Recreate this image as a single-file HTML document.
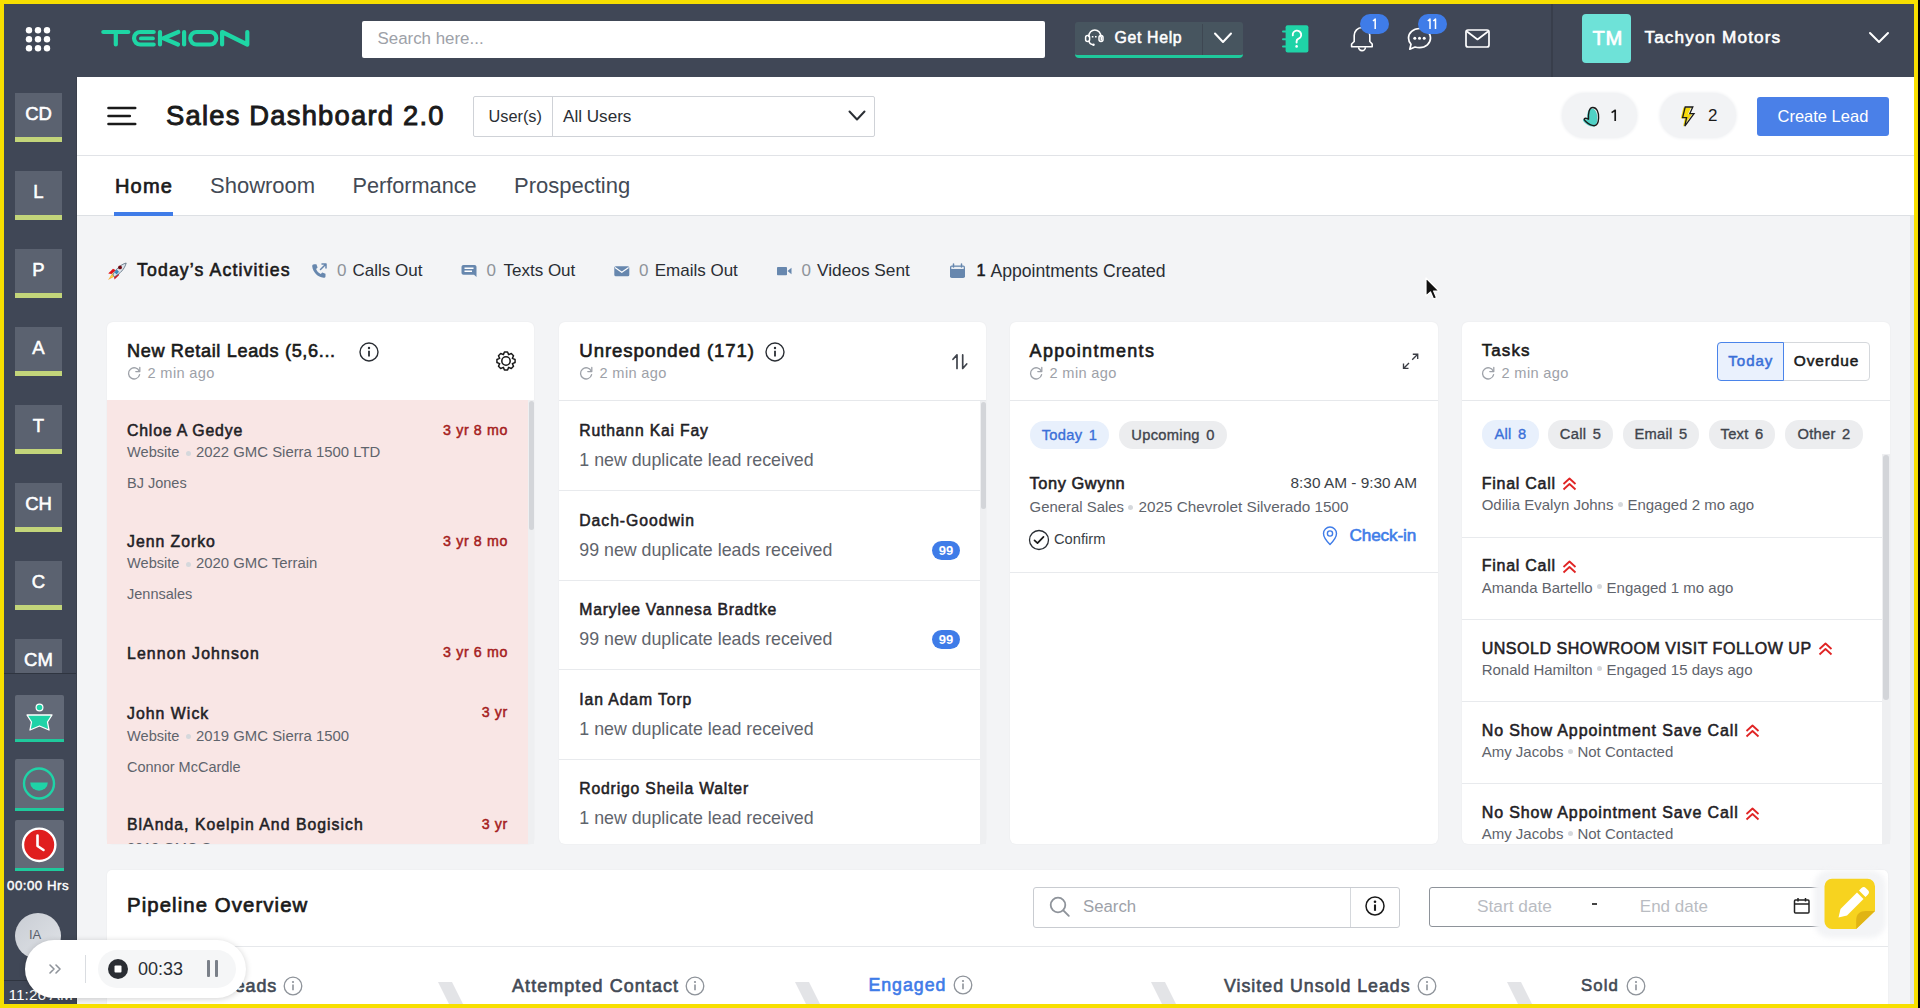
<!DOCTYPE html>
<html><head><meta charset="utf-8">
<style>
*{box-sizing:border-box;margin:0;padding:0}
html,body{width:1920px;height:1008px;overflow:hidden;background:#000;font-family:"Liberation Sans",sans-serif}
.a{position:absolute}
.t{position:absolute;left:var(--x);top:calc(var(--y) - 0.158*var(--s) - var(--o,0px));font-size:var(--s);line-height:1;white-space:nowrap}
.b{font-weight:bold}
.m{-webkit-text-stroke:calc(var(--s)*0.034) currentColor}
.r{transform:translateX(-100%)}
svg{position:absolute;overflow:visible}
#page{position:absolute;left:0;top:0;width:1918px;height:1008px;background:#F3F4F6;overflow:hidden}
.card{position:absolute;top:322px;height:522px;background:#fff;border-radius:6px;box-shadow:0 0 2px rgba(0,0,0,.06);overflow:hidden}
.sb{left:15px;width:47px;height:49px;background:#5B6270;border-bottom:5px solid #C3D57A;color:#fff;font-size:18.5px;-webkit-text-stroke:0.55px #fff;line-height:41.5px;text-align:center}
.sbi{position:absolute;left:15px;width:49px;height:47px;background:#626977;border-bottom:3px solid #1FC99C;border-radius:2px 2px 0 0}
.dot{width:5px;height:5px;border-radius:50%;background:#D5D8DC}
.badge{width:28px;height:19px;border-radius:10px;background:#3F7CE8;color:#fff;font-weight:bold;font-size:13px;line-height:19px;text-align:center}
.chip{height:28px;border-radius:14px;font-size:14.7px;-webkit-text-stroke:0.35px currentColor;letter-spacing:0.3px;word-spacing:2px;line-height:28px;text-align:center;white-space:nowrap}
.dbl{position:relative;display:inline-block;vertical-align:top;margin-left:6px;margin-top:2.5px}
.sdot{display:inline-block;width:5px;height:5px;border-radius:50%;background:#D5D8DC;margin:0 4.5px;vertical-align:middle;position:relative;top:-2px}
.hdiv{position:absolute;left:0;right:0;top:77px;height:1px;background:#E6E8EB}
</style></head><body>
<div id="page">

<!-- TOP HEADER -->
<div class="a" style="left:0;top:0;width:1918px;height:77px;background:#404756"></div>
<!-- grid dots -->
<svg style="left:0;top:0" width="80" height="77">
<g fill="#fff">
<circle cx="29" cy="30.3" r="3.2"/><circle cx="38" cy="30.3" r="3.2"/><circle cx="47" cy="30.3" r="3.2"/>
<circle cx="29" cy="39.3" r="3.2"/><circle cx="38" cy="39.3" r="3.2"/><circle cx="47" cy="39.3" r="3.2"/>
<circle cx="29" cy="48.3" r="3.2"/><circle cx="38" cy="48.3" r="3.2"/><circle cx="47" cy="48.3" r="3.2"/>
</g></svg>
<!-- TEKION logo -->
<svg style="left:95px;top:22px" width="160" height="32">
<g fill="none" stroke="#1ED6A5" stroke-width="4.2" stroke-linecap="round" stroke-linejoin="round">
<path d="M8.3,10H33.3M20.8,10V22.5"/>
<path d="M58.7,10H45.3A6.25,6.25 0 0 0 45.3,22.5H58.7"/>
<path d="M45.8,16.45H58" stroke-width="3.7"/>
<path d="M65,10V22.5M83.3,10L68.5,16.3L83,22.5"/>
<path d="M89.1,10V22.5"/>
<rect x="95.3" y="10" width="26" height="12.5" rx="6.25"/>
<path d="M127.1,22.5V10L152.3,22.5V10"/>
</g></svg>
<!-- search -->
<div class="a" style="left:362px;top:21px;width:683px;height:37px;background:#fff;border-radius:2px"></div>
<div class="t" style="--x:377.5px;--y:32.5px;--s:16.9px;--o:-1.60px;color:#9DA1A8">Search here...</div>
<!-- Get Help -->
<div class="a" style="left:1075px;top:22px;width:168px;height:36px;background:#47555F;border-radius:3px 3px 4px 4px;border-bottom:3px solid #1FC99C"></div>
<div class="a" style="left:1202px;top:24px;width:1px;height:31px;background:#3E4752"></div>
<svg style="left:1084px;top:28px" width="21" height="19" viewBox="0 0 21 19">
<g fill="none" stroke="#fff" stroke-width="1.5" stroke-linecap="round">
<path d="M4.8,8.5A6,6.6 0 0 1 16.8,8.5"/>
<rect x="1.6" y="7.4" width="4" height="6" rx="2"/>
<rect x="15" y="7.4" width="4" height="6" rx="2"/>
<path d="M5,13.2Q5.5,16.5 9.5,16.8"/>
</g>
<g fill="#fff"><rect x="7.8" y="8" width="1.6" height="1.5"/><rect x="11" y="8" width="1.6" height="1.5"/><circle cx="9.5" cy="16.8" r="1.2"/><rect x="16.5" y="8.5" width="1.5" height="4"/></g>
</svg>
<div class="t m" style="--x:1114.5px;--y:31.3px;--s:15.84px;--o:-1.50px;color:#fff;letter-spacing:0.67px">Get Help</div>
<svg style="left:1213px;top:32px" width="20" height="12" viewBox="0 0 20 12"><path d="M2,1.5L10,10L18,1.5" fill="none" stroke="#fff" stroke-width="2" stroke-linecap="round" stroke-linejoin="round"/></svg>
<!-- help book -->
<svg style="left:1282px;top:24.5px" width="28" height="28" viewBox="0 0 28 28">
<rect x="3.6" y="0.2" width="22.8" height="27.2" rx="2" fill="#1FD3A7"/>
<g fill="#1FD3A7"><rect x="0" y="5.5" width="5" height="2" rx="1"/><rect x="0" y="13.2" width="5" height="2" rx="1"/><rect x="0" y="20.5" width="5" height="2" rx="1"/></g>
<path d="M10.8,10.3A4.2,4.2 0 1 1 16.2,13.8C15.2,14.3 14.6,15 14.6,16.2V17.5" fill="none" stroke="#fff" stroke-width="1.9" stroke-linecap="round"/>
<circle cx="14.6" cy="21.4" r="1.3" fill="#fff"/>
</svg>
<!-- bell -->
<svg style="left:1349px;top:25px" width="26" height="28" viewBox="0 0 26 28">
<path d="M5.2,16.5V10.5A7.8,8 0 0 1 20.8,10.5V16.5L23.2,19V21.8H2.6V19Z" fill="none" stroke="#fff" stroke-width="1.6" stroke-linejoin="round"/>
<path d="M9.6,22.2A3.4,3.4 0 0 0 16.4,22.2" fill="none" stroke="#fff" stroke-width="1.6"/>
</svg>
<div class="a" style="left:1360px;top:14px;width:29px;height:20px;border-radius:10px;background:#3F7CE8"></div>
<svg style="left:1360px;top:14px" width="29" height="20" viewBox="0 0 29 20"><path d="M13,7L15.2,5V15" fill="none" stroke="#fff" stroke-width="1.5" stroke-linejoin="round"/></svg>
<!-- chat -->
<svg style="left:1406px;top:26px" width="28" height="26" viewBox="0 0 28 26">
<path d="M13.5,2.5C7.2,2.5 2.5,6.8 2.5,12C2.5,14.5 3.5,16.6 5,18.3L3.8,23.2L9,21C10.4,21.4 11.9,21.6 13.5,21.6C19.8,21.6 24.5,17.3 24.5,12C24.5,6.8 19.8,2.5 13.5,2.5Z" fill="none" stroke="#fff" stroke-width="1.7" stroke-linejoin="round"/>
<g fill="#fff"><circle cx="8.8" cy="12.2" r="1.5"/><circle cx="13.5" cy="12.2" r="1.5"/><circle cx="18.2" cy="12.2" r="1.5"/></g>
</svg>
<div class="a" style="left:1418px;top:14px;width:29px;height:20px;border-radius:10px;background:#3F7CE8"></div>
<svg style="left:1418px;top:14px" width="29" height="20" viewBox="0 0 29 20"><path d="M9.8,7L12,5V15M15.3,7L17.5,5V15" fill="none" stroke="#fff" stroke-width="1.5" stroke-linejoin="round"/></svg>
<!-- mail -->
<svg style="left:1465px;top:29px" width="26" height="20" viewBox="0 0 26 20">
<rect x="1" y="1" width="23" height="17" rx="2" fill="none" stroke="#fff" stroke-width="1.7"/>
<path d="M2,2.5L12.5,10.5L23,2.5" fill="none" stroke="#fff" stroke-width="1.7" stroke-linejoin="round"/>
</svg>
<!-- divider -->
<div class="a" style="left:1551px;top:4px;width:2px;height:73px;background:#383E4B"></div>
<!-- TM -->
<div class="a" style="left:1582px;top:14px;width:49px;height:49px;background:#6EE2D8;border-radius:4px"></div>
<div class="t m" style="--x:1592.5px;--y:31px;--s:20.16px;--o:-0.17px;color:#fff;letter-spacing:0.61px">TM</div>
<div class="t m" style="--x:1644.5px;--y:30.9px;--s:17.18px;--o:-0.62px;color:#fff;letter-spacing:1.11px">Tachyon Motors</div>
<svg style="left:1868px;top:31px" width="22" height="13" viewBox="0 0 22 13"><path d="M2,2L11,11L20,2" fill="none" stroke="#fff" stroke-width="2" stroke-linecap="round" stroke-linejoin="round"/></svg>

<!-- SIDEBAR -->
<div class="a" style="left:0;top:77px;width:76px;height:931px;background:#404756"></div>
<div class="a" style="left:76px;top:77px;width:1px;height:931px;background:#3A404C"></div>
<div class="a" style="left:0;top:77px;width:76px;height:597px;overflow:hidden">
 <div class="a sb" style="top:16px"><span>CD</span></div>
 <div class="a sb" style="top:94px"><span>L</span></div>
 <div class="a sb" style="top:172px"><span>P</span></div>
 <div class="a sb" style="top:250px"><span>A</span></div>
 <div class="a sb" style="top:328px"><span>T</span></div>
 <div class="a sb" style="top:406px"><span>CH</span></div>
 <div class="a sb" style="top:484px"><span>C</span></div>
 <div class="a sb" style="top:562px"><span>CM</span></div>
</div>
<div class="a" style="left:4px;top:673px;width:72px;height:1px;background:#2F3540"></div>
<!-- bottom sidebar icons -->
<div class="a sbi" style="top:695px"></div>
<svg style="left:15px;top:695px" width="49" height="44" viewBox="0 0 49 44">
<circle cx="24.5" cy="12.5" r="3.4" fill="#1FD3A7" stroke="#fff" stroke-width="1.2"/>
<path d="M12,20H37L32.5,27L34,35L24.5,31L15,35L16.5,27Z" fill="#1FD3A7" stroke="#fff" stroke-width="1.3" stroke-linejoin="round"/>
</svg>
<div class="a sbi" style="top:759px;height:51.5px"></div>
<svg style="left:15px;top:759px" width="49" height="48" viewBox="0 0 49 48">
<circle cx="24" cy="24.5" r="15" fill="none" stroke="#1FD3A7" stroke-width="2.4"/>
<path d="M15.2,23.5H32.8A8.8,8.3 0 0 1 15.2,23.5Z" fill="#1FD3A7"/>
</svg>
<div class="a sbi" style="top:820px;height:51px"></div>
<svg style="left:15px;top:820px" width="49" height="48" viewBox="0 0 49 48">
<circle cx="24.2" cy="24.8" r="16.2" fill="#E01E1E" stroke="#fff" stroke-width="2.4"/>
<path d="M22.5,15.5V26L28.5,30" fill="none" stroke="#fff" stroke-width="2.6" stroke-linecap="round" stroke-linejoin="round"/>
</svg>
<div class="t m" style="--x:7px;--y:881px;--s:13.25px;--o:0.16px;color:#fff;letter-spacing:0.52px">00:00 Hrs</div>
<div class="a" style="left:4px;top:980px;width:72px;height:1px;background:#2F3540"></div>
<div class="a" style="left:15px;top:913px;width:46px;height:46px;border-radius:50%;background:linear-gradient(135deg,#C9CDD4,#E0E3E7)"></div>
<div class="t" style="--x:29px;--y:930px;--s:13px;--o:0.15px;color:#5A606B">IA</div>
<div class="t" style="--x:8.5px;--y:990px;--s:15.5px;--o:0.68px;color:#fff">11:26 AM</div>

<!-- PAGE HEADER (white) -->
<div class="a" style="left:77px;top:77px;width:1841px;height:78px;background:#fff"></div>
<div class="a" style="left:77px;top:155px;width:1841px;height:1px;background:#E1E3E7"></div>
<svg style="left:106px;top:106px" width="32" height="20" viewBox="0 0 32 20">
<g stroke="#1A1A1A" stroke-width="2.6" stroke-linecap="round"><path d="M2.5,2H29.2M2.5,10H23.8M2.5,18H29.2"/></g>
</svg>
<div class="t m" style="--x:166px;--y:106px;--s:27.36px;--o:-0.31px;color:#1A1A1A;letter-spacing:1.22px">Sales Dashboard 2.0</div>
<div class="a" style="left:473px;top:96px;width:402px;height:41px;border:1px solid #CFD2D7;border-radius:2px;background:#fff"></div>
<div class="a" style="left:552px;top:97px;width:1px;height:39px;background:#CFD2D7"></div>
<div class="t" style="--x:488.5px;--y:110px;--s:16.3px;--o:-0.45px;color:#2A2E34">User(s)</div>
<div class="t" style="--x:563px;--y:110px;--s:17.1px;--o:-0.62px;color:#2A2E34">All Users</div>
<svg style="left:848px;top:110px" width="18" height="12" viewBox="0 0 18 12"><path d="M1.5,1.5L9,9.5L16.5,1.5" fill="none" stroke="#2A2E34" stroke-width="2" stroke-linecap="round" stroke-linejoin="round"/></svg>
<!-- pills -->
<div class="a" style="left:1562px;top:93px;width:75px;height:45px;border-radius:23px;background:#F2F3F5;box-shadow:0 0 3px 1px #F2F3F5"></div>
<svg style="left:1581px;top:106px" width="20" height="22" viewBox="0 0 20 22">
<path d="M7.5,13.2C7.2,8 7.8,1.5 11.8,1.5C15.8,1.5 17.8,6 17.6,12C17.4,17 16,19.7 13.2,19.7C9.5,19.7 7,17.5 4.8,15.5C3.5,14.3 2.8,13 3.5,12.5C4.5,11.8 6,12.5 7.5,13.2Z" transform="translate(-1.3,0.9)" fill="#4FD1C5"/>
<path d="M7.5,13.2C7.2,8 7.8,1.5 11.8,1.5C15.8,1.5 17.8,6 17.6,12C17.4,17 16,19.7 13.2,19.7C9.5,19.7 7,17.5 4.8,15.5C3.5,14.3 2.8,13 3.5,12.5C4.5,11.8 6,12.5 7.5,13.2Z" fill="none" stroke="#1A1A1A" stroke-width="1.4" stroke-linejoin="round"/>
</svg>
<svg style="left:1609px;top:109px" width="10" height="13" viewBox="0 0 10 13"><path d="M2.6,3.6L6.2,1.3V12" fill="none" stroke="#1A1A1A" stroke-width="1.7" stroke-linejoin="round"/></svg>
<div class="a" style="left:1660px;top:93px;width:76px;height:45px;border-radius:23px;background:#F2F3F5;box-shadow:0 0 3px 1px #F2F3F5"></div>
<svg style="left:1679px;top:106px" width="18" height="22" viewBox="0 0 18 22">
<path d="M6.2,1H13.8L10.8,7.6H15L5.8,20.2L7.6,11.6H3.6Z" transform="translate(-1.8,0.6)" fill="#F5D90A"/>
<path d="M6.2,1H13.8L10.8,7.6H15L5.8,20.2L7.6,11.6H3.6Z" fill="none" stroke="#1A1A1A" stroke-width="1.3" stroke-linejoin="miter"/>
</svg>
<div class="t" style="--x:1708px;--y:109.5px;--s:17px;--o:-0.60px;color:#1A1A1A">2</div>
<div class="a" style="left:1757px;top:97px;width:132px;height:39px;border-radius:3px;background:#4A80E8"></div>
<div class="t" style="--x:1777.5px;--y:109.7px;--s:16.5px;--o:-0.42px;color:#fff">Create Lead</div>

<!-- TABS -->
<div class="a" style="left:77px;top:156px;width:1841px;height:59px;background:#fff"></div>
<div class="a" style="left:77px;top:215px;width:1841px;height:1px;background:#DDE0E4"></div>
<div class="t m" style="--x:115px;--y:179px;--s:20.06px;--o:-0.17px;color:#1A1A1A;letter-spacing:1.14px">Home</div>
<div class="a" style="left:114px;top:212px;width:59px;height:4px;background:#3F7CE8"></div>
<div class="t" style="--x:210px;--y:178.5px;--s:22px;--o:-0.39px;color:#434A55">Showroom</div>
<div class="t" style="--x:352.5px;--y:178.5px;--s:21.7px;--o:-0.40px;color:#434A55">Performance</div>
<div class="t" style="--x:514px;--y:178.5px;--s:22px;--o:-0.39px;color:#434A55">Prospecting</div>

<!-- ACTIVITIES -->
<svg style="left:104px;top:258px" width="26" height="26" viewBox="0 0 26 26">
<path d="M4.2,15.5L9,10.8L12,12.2L7.5,16Z" fill="#E0161B"/>
<path d="M10.5,21.5L15.2,17L14,14L10,18.5Z" fill="#D5121A"/>
<path d="M4,22L8.5,15L11.5,18Z" fill="#F7B23B"/>
<path d="M6.2,20L8.8,16.3L9.8,17.4Z" fill="#FFE94A"/>
<path d="M8.8,17C11.5,11.5 16.5,6.5 22.2,5C20.7,11 15.8,15.8 10.5,18.8Z" fill="#DCE3EA" stroke="#56687A" stroke-width="0.8" stroke-linejoin="round"/>
<path d="M10.5,14.2L12.8,11.6L15,13.8L12.5,16.4Z" fill="#3A87B8"/>
<circle cx="16" cy="9.4" r="1.9" fill="#6E0B12"/>
</svg>
<div class="t m" style="--x:137px;--y:263.5px;--s:17.66px;--o:-1.79px;color:#1A1A1A;letter-spacing:1.14px">Today’s Activities</div>
<svg style="left:311px;top:263px" width="17" height="16" viewBox="0 0 17 16">
<path d="M3.2,1.2L5.4,1.2L6.6,4.6L5.1,5.9C5.9,8 7.5,9.8 9.8,10.9L11.2,9.4L14.5,10.7V13.2C14.5,14.2 13.6,14.9 12.6,14.8C6.6,14.1 1.9,9.3 1.2,3.3C1.1,2.1 2,1.2 3.2,1.2Z" fill="#6787AE"/>
<path d="M9.5,6.5L15,1M11,1H15V5" fill="none" stroke="#6787AE" stroke-width="1.5" stroke-linecap="round" stroke-linejoin="round"/>
</svg>
<div class="t" style="--x:337px;--y:264.5px;--s:17px;--o:-0.60px;color:#8E939A">0</div>
<div class="t" style="--x:352.5px;--y:264.5px;--s:17px;--o:-0.60px;color:#2A2E34">Calls Out</div>
<svg style="left:461px;top:264px" width="17" height="14" viewBox="0 0 17 14">
<path d="M2.5,1H13.5C14.6,1 15.5,1.9 15.5,3V13L13,10.8H2.5C1.4,10.8 0.5,9.9 0.5,8.8V3C0.5,1.9 1.4,1 2.5,1Z" fill="#6787AE"/>
<path d="M3.5,4.3H12.5M3.5,7.3H11" stroke="#fff" stroke-width="1.4"/>
</svg>
<div class="t" style="--x:486.5px;--y:264.5px;--s:17px;--o:-0.60px;color:#8E939A">0</div>
<div class="t" style="--x:503.5px;--y:264.5px;--s:17px;--o:-0.60px;color:#2A2E34">Texts Out</div>
<svg style="left:614px;top:266px" width="16" height="11" viewBox="0 0 16 11">
<rect x="0.3" y="0.3" width="15" height="10" rx="1.5" fill="#6787AE"/>
<path d="M1,1.5L7.8,6.3L14.6,1.5" fill="none" stroke="#fff" stroke-width="1.1"/>
</svg>
<div class="t" style="--x:639px;--y:264.5px;--s:17px;--o:-0.60px;color:#8E939A">0</div>
<div class="t" style="--x:654.7px;--y:264.5px;--s:17px;--o:-0.60px;color:#2A2E34">Emails Out</div>
<svg style="left:776px;top:266px" width="17" height="10" viewBox="0 0 17 10">
<rect x="1" y="1" width="10" height="8.2" rx="0.8" fill="#6787AE"/>
<path d="M11.5,5L15.5,1.8V8.2Z" fill="#6787AE"/>
</svg>
<div class="t" style="--x:801.5px;--y:264.5px;--s:17px;--o:-0.60px;color:#8E939A">0</div>
<div class="t" style="--x:817px;--y:264.5px;--s:17.3px;--o:-0.64px;color:#2A2E34">Videos Sent</div>
<svg style="left:949px;top:263px" width="17" height="16" viewBox="0 0 17 16">
<rect x="1" y="2.5" width="15" height="12.5" rx="1.8" fill="#6787AE"/>
<rect x="2.3" y="3.8" width="12.4" height="2.2" fill="#E9EDF2"/>
<path d="M4.5,1V4M12.5,1V4" stroke="#6787AE" stroke-width="1.5" stroke-linecap="round"/>
</svg>
<div class="t m" style="--x:976.5px;--y:264.5px;--s:16.32px;--o:-0.45px;color:#1A1A1A;letter-spacing:0.38px">1</div>
<div class="t" style="--x:990.5px;--y:263.6px;--s:17.6px;--o:-1.79px;color:#2A2E34">Appointments Created</div>

<!-- CARD 1 -->
<div class="card" style="left:107px;width:427px"></div>
<div class="t m" style="--x:127px;--y:344px;--s:18.14px;--o:-0.79px;color:#1A1A1A;letter-spacing:0.64px">New Retail Leads (5,6...</div>
<svg class="info" style="left:359px;top:341.5px" width="20" height="20" viewBox="0 0 20 20"><circle cx="10" cy="10" r="9" fill="none" stroke="#2A2E34" stroke-width="1.4"/><circle cx="10" cy="6" r="1.2" fill="#2A2E34"/><path d="M10,8.8V14.5" stroke="#2A2E34" stroke-width="1.8"/></svg>
<svg style="left:495.5px;top:350.8px" width="20" height="20" viewBox="0 0 20 20"><path d="M8.44,0.93 L11.56,0.93 L12.64,3.63 L15.31,2.49 L17.51,4.69 L16.37,7.36 L19.07,8.44 L19.07,11.56 L16.37,12.64 L17.51,15.31 L15.31,17.51 L12.64,16.37 L11.56,19.07 L8.44,19.07 L7.36,16.37 L4.69,17.51 L2.49,15.31 L3.63,12.64 L0.93,11.56 L0.93,8.44 L3.63,7.36 L2.49,4.69 L4.69,2.49 L7.36,3.63Z" fill="none" stroke="#1A1A1A" stroke-width="1.5" stroke-linejoin="round"/><circle cx="10" cy="10" r="4.2" fill="none" stroke="#1A1A1A" stroke-width="1.5"/></svg>
<svg class="rf" style="left:126.5px;top:365.8px" width="15" height="14" viewBox="0 0 15 14"><path d="M12.3,5.2A5.6,5.6 0 1 0 12.6,8.6" fill="none" stroke="#9DA1A8" stroke-width="1.3" stroke-linecap="round"/><path d="M12.8,1.5V5.6H8.8" fill="none" stroke="#9DA1A8" stroke-width="1.3" stroke-linecap="round" stroke-linejoin="round"/></svg>
<div class="t" style="--x:147.5px;--y:368.2px;--s:14.6px;--o:-0.16px;color:#9DA1A8;letter-spacing:0.35px">2 min ago</div>
<div class="a" style="left:107px;top:400px;width:421px;height:444px;background:#F9E6E5"></div>
<div class="a" style="left:528px;top:400px;width:6px;height:444px;background:#EEEFF1"></div>
<div class="a" style="left:528.5px;top:401px;width:5px;height:129px;background:#D3D5D9;border-radius:3px"></div>
<div class="a" style="left:107px;top:400px;width:421px;height:444px;overflow:hidden"><div class="a" style="left:-107px;top:-400px;width:1918px;height:1008px">
 <div class="t m" style="--x:127px;--y:424.2px;--s:15.84px;--o:-1.50px;color:#1F2125;letter-spacing:0.80px">Chloe A Gedye</div>
 <div class="t m r" style="--x:508px;--y:425.0px;--s:14.21px;--o:-0.06px;color:#A51D1D;letter-spacing:0.64px">3 yr 8 mo</div>
 <div class="t" style="--x:127px;--y:447.5px;--s:14.6px;--o:-0.16px;color:#5F646C">Website</div><div class="a dot" style="left:186px;top:450.5px"></div>
 <div class="t" style="--x:196px;--y:447.5px;--s:14.9px;--o:-0.06px;color:#5F646C">2022 GMC Sierra 1500 LTD</div>
 <div class="t" style="--x:127px;--y:478px;--s:14.5px;--o:-0.17px;color:#5F646C">BJ Jones</div>

 <div class="t m" style="--x:127px;--y:535.2px;--s:15.84px;--o:-1.50px;color:#1F2125;letter-spacing:0.97px">Jenn Zorko</div>
 <div class="t m r" style="--x:508px;--y:536.0px;--s:14.21px;--o:-0.06px;color:#A51D1D;letter-spacing:0.64px">3 yr 8 mo</div>
 <div class="t" style="--x:127px;--y:558.5px;--s:14.6px;--o:-0.16px;color:#5F646C">Website</div><div class="a dot" style="left:186px;top:561.5px"></div>
 <div class="t" style="--x:196px;--y:558.5px;--s:14.9px;--o:-0.06px;color:#5F646C">2020 GMC Terrain</div>
 <div class="t" style="--x:127px;--y:589px;--s:14.5px;--o:-0.17px;color:#5F646C">Jennsales</div>

 <div class="t m" style="--x:127px;--y:646.8px;--s:15.84px;--o:-1.50px;color:#1F2125;letter-spacing:1.13px">Lennon Johnson</div>
 <div class="t m r" style="--x:508px;--y:647.6px;--s:14.21px;--o:-0.06px;color:#A51D1D;letter-spacing:0.64px">3 yr 6 mo</div>

 <div class="t m" style="--x:127px;--y:706.9px;--s:15.84px;--o:-1.50px;color:#1F2125;letter-spacing:1.03px">John Wick</div>
 <div class="t m r" style="--x:508px;--y:707.6px;--s:14.21px;--o:-0.06px;color:#A51D1D;letter-spacing:0.66px">3 yr</div>
 <div class="t" style="--x:127px;--y:731.3px;--s:14.6px;--o:-0.16px;color:#5F646C">Website</div><div class="a dot" style="left:186px;top:734.3px"></div>
 <div class="t" style="--x:196px;--y:731.3px;--s:14.9px;--o:-0.06px;color:#5F646C">2019 GMC Sierra 1500</div>
 <div class="t" style="--x:127px;--y:761.8px;--s:14.5px;--o:-0.17px;color:#5F646C">Connor McCardle</div>

 <div class="t m" style="--x:127px;--y:818.3px;--s:15.79px;--o:-1.36px;color:#1F2125;letter-spacing:1.03px">BlAnda, Koelpin And Bogisich</div>
 <div class="t m r" style="--x:508px;--y:819px;--s:14.21px;--o:-0.06px;color:#A51D1D;letter-spacing:0.66px">3 yr</div>
 <div class="t" style="--x:127px;--y:842.8px;--s:14.6px;--o:-0.16px;color:#5F646C">2019 GMC S...</div>
</div></div>

<!-- CARD 3 -->
<div class="card" style="left:1010px;width:428px"></div>
<div class="t m" style="--x:1029.6px;--y:344px;--s:17.95px;--o:-1.78px;color:#1A1A1A;letter-spacing:1.33px">Appointments</div>
<svg style="left:1402px;top:353px" width="18" height="18" viewBox="0 0 18 18"><path d="M10.8,1.2H15.7V6M15.7,1.2L10.2,6.7M1.5,10.5V15.4H6.5M1.5,15.4L7,9.9" fill="none" stroke="#3A3D44" stroke-width="1.35" stroke-linejoin="miter"/></svg>
<svg style="left:1029px;top:365.8px" width="15" height="14" viewBox="0 0 15 14"><path d="M12.3,5.2A5.6,5.6 0 1 0 12.6,8.6" fill="none" stroke="#9DA1A8" stroke-width="1.3" stroke-linecap="round"/><path d="M12.8,1.5V5.6H8.8" fill="none" stroke="#9DA1A8" stroke-width="1.3" stroke-linecap="round" stroke-linejoin="round"/></svg>
<div class="t" style="--x:1049.5px;--y:368.2px;--s:14.6px;--o:-0.16px;color:#9DA1A8;letter-spacing:0.35px">2 min ago</div>
<div class="a" style="left:1010px;top:400px;width:428px;height:1px;background:#E6E8EB"></div>
<div class="a chip" style="left:1030px;top:421px;width:79px;background:#E8F0FC;color:#3A6FD8">Today 1</div>
<div class="a chip" style="left:1119px;top:421px;width:108px;background:#ECEDEF;color:#3F444C">Upcoming 0</div>
<div class="t m" style="--x:1029.6px;--y:477px;--s:16.4px;--o:-0.44px;color:#1F2125;letter-spacing:0.55px">Tony Gwynn</div>
<div class="t" style="--x:1290.5px;--y:478.3px;--s:15.4px;--o:0.73px;color:#3A3F47">8:30 AM - 9:30 AM</div>
<div class="t" style="--x:1029.6px;--y:502px;--s:14.9px;--o:-0.06px;color:#5F646C">General Sales</div><div class="a dot" style="left:1128px;top:505px"></div>
<div class="t" style="--x:1138.5px;--y:502px;--s:15.3px;--o:0.77px;color:#5F646C">2025 Chevrolet Silverado 1500</div>
<svg style="left:1028px;top:528.5px" width="22" height="22" viewBox="0 0 22 22"><circle cx="11" cy="11" r="9.5" fill="none" stroke="#2A2E34" stroke-width="1.3"/><path d="M6.5,11.3L9.5,14.2L15.5,7.8" fill="none" stroke="#1A1A1A" stroke-width="1.7" stroke-linecap="round" stroke-linejoin="round"/></svg>
<div class="t" style="--x:1054px;--y:534.5px;--s:14.7px;--o:-0.13px;color:#3A3F47">Confirm</div>
<svg style="left:1322px;top:526px" width="16" height="20" viewBox="0 0 16 20"><path d="M8,18.5C8,18.5 1.5,12 1.5,7.5A6.5,6.5 0 0 1 14.5,7.5C14.5,12 8,18.5 8,18.5Z" fill="none" stroke="#3F7CE8" stroke-width="1.4" stroke-linejoin="round"/><circle cx="8" cy="7.5" r="2.6" fill="none" stroke="#3F7CE8" stroke-width="1.4"/></svg>
<div class="t m" style="--x:1349.5px;--y:529.3px;--s:17.2px;--o:-0.62px;color:#3F7CE8;letter-spacing:-0.15px">Check-in</div>
<div class="a" style="left:1010px;top:572px;width:428px;height:1px;background:#E8EAED"></div>

<!-- CARD 4 -->
<div class="card" style="left:1462px;width:428px"></div>
<div class="t m" style="--x:1481.7px;--y:344.4px;--s:16.99px;--o:-0.60px;color:#1A1A1A;letter-spacing:1.09px">Tasks</div>
<svg style="left:1481px;top:365.8px" width="15" height="14" viewBox="0 0 15 14"><path d="M12.3,5.2A5.6,5.6 0 1 0 12.6,8.6" fill="none" stroke="#9DA1A8" stroke-width="1.3" stroke-linecap="round"/><path d="M12.8,1.5V5.6H8.8" fill="none" stroke="#9DA1A8" stroke-width="1.3" stroke-linecap="round" stroke-linejoin="round"/></svg>
<div class="t" style="--x:1501.5px;--y:368.2px;--s:14.6px;--o:-0.16px;color:#9DA1A8;letter-spacing:0.35px">2 min ago</div>
<div class="a" style="left:1717px;top:342px;width:153px;height:39px;border:1px solid #D5D8DC;border-radius:4px;background:#fff"></div>
<div class="a" style="left:1717px;top:342px;width:67px;height:39px;border:1.2px solid #4A84EA;border-radius:4px 0 0 4px;background:#EAF1FD"></div>
<div class="t m" style="--x:1728.3px;--y:356.3px;--s:15.07px;--o:0.84px;color:#3A6FD8;letter-spacing:0.97px">Today</div>
<div class="t m" style="--x:1793.8px;--y:356.3px;--s:15.46px;--o:0.71px;color:#1A1A1A;letter-spacing:0.86px">Overdue</div>
<div class="a" style="left:1462px;top:400px;width:428px;height:1px;background:#E6E8EB"></div>
<div class="a chip" style="left:1482px;top:420px;width:57px;height:29px;background:#E8F0FC;color:#3A6FD8">All 8</div>
<div class="a chip" style="left:1548px;top:420px;width:65px;height:29px;background:#ECEDEF;color:#3F444C">Call 5</div>
<div class="a chip" style="left:1623px;top:420px;width:76px;height:29px;background:#ECEDEF;color:#3F444C">Email 5</div>
<div class="a chip" style="left:1709px;top:420px;width:66px;height:29px;background:#ECEDEF;color:#3F444C">Text 6</div>
<div class="a chip" style="left:1785px;top:420px;width:78px;height:29px;background:#ECEDEF;color:#3F444C">Other 2</div>
<div class="a" style="left:1882px;top:454px;width:8px;height:390px;background:#EEEFF1"></div>
<div class="a" style="left:1883px;top:455px;width:6px;height:245px;background:#D3D5D9;border-radius:3px"></div>
<div class="a" style="left:1462px;top:454px;width:420px;height:390px;overflow:hidden"><div class="a" style="left:-1462px;top:-454px;width:1918px;height:1008px">
<div class="t m ttl" style="--x:1481.7px;--y:477.0px;--s:16.03px;--o:-0.50px;color:#1F2125;letter-spacing:0.74px">Final Call<svg class="dbl" width="15" height="14" viewBox="0 0 15 14"><path d="M1.5,7L7.5,1.5L13.5,7M1.5,12.5L7.5,7L13.5,12.5" fill="none" stroke="#E02424" stroke-width="1.8" stroke-linejoin="round"/></svg></div>
<div class="t" style="--x:1481.7px;--y:500.6px;--s:15px;--o:0.98px;color:#5F646C">Odilia Evalyn Johns<span class="sdot"></span>Engaged 2 mo ago</div>
<div class="a" style="left:1462px;top:536.5px;width:420px;height:1px;background:#E8EAED"></div>
<div class="t m ttl" style="--x:1481.7px;--y:559.3px;--s:16.03px;--o:-0.50px;color:#1F2125;letter-spacing:0.74px">Final Call<svg class="dbl" width="15" height="14" viewBox="0 0 15 14"><path d="M1.5,7L7.5,1.5L13.5,7M1.5,12.5L7.5,7L13.5,12.5" fill="none" stroke="#E02424" stroke-width="1.8" stroke-linejoin="round"/></svg></div>
<div class="t" style="--x:1481.7px;--y:582.9px;--s:15px;--o:0.98px;color:#5F646C">Amanda Bartello<span class="sdot"></span>Engaged 1 mo ago</div>
<div class="a" style="left:1462px;top:618.8px;width:420px;height:1px;background:#E8EAED"></div>
<div class="t m ttl" style="--x:1481.7px;--y:641.6px;--s:16.03px;--o:-0.50px;color:#1F2125;letter-spacing:0.52px">UNSOLD SHOWROOM VISIT FOLLOW UP<svg class="dbl" width="15" height="14" viewBox="0 0 15 14"><path d="M1.5,7L7.5,1.5L13.5,7M1.5,12.5L7.5,7L13.5,12.5" fill="none" stroke="#E02424" stroke-width="1.8" stroke-linejoin="round"/></svg></div>
<div class="t" style="--x:1481.7px;--y:665.2px;--s:15px;--o:0.98px;color:#5F646C">Ronald Hamilton<span class="sdot"></span>Engaged 15 days ago</div>
<div class="a" style="left:1462px;top:701.1px;width:420px;height:1px;background:#E8EAED"></div>
<div class="t m ttl" style="--x:1481.7px;--y:723.9px;--s:16.03px;--o:-0.50px;color:#1F2125;letter-spacing:0.88px">No Show Appointment Save Call<svg class="dbl" width="15" height="14" viewBox="0 0 15 14"><path d="M1.5,7L7.5,1.5L13.5,7M1.5,12.5L7.5,7L13.5,12.5" fill="none" stroke="#E02424" stroke-width="1.8" stroke-linejoin="round"/></svg></div>
<div class="t" style="--x:1481.7px;--y:747.5px;--s:15px;--o:0.98px;color:#5F646C">Amy Jacobs<span class="sdot"></span>Not Contacted</div>
<div class="a" style="left:1462px;top:783.4px;width:420px;height:1px;background:#E8EAED"></div>
<div class="t m ttl" style="--x:1481.7px;--y:806.2px;--s:16.03px;--o:-0.50px;color:#1F2125;letter-spacing:0.88px">No Show Appointment Save Call<svg class="dbl" width="15" height="14" viewBox="0 0 15 14"><path d="M1.5,7L7.5,1.5L13.5,7M1.5,12.5L7.5,7L13.5,12.5" fill="none" stroke="#E02424" stroke-width="1.8" stroke-linejoin="round"/></svg></div>
<div class="t" style="--x:1481.7px;--y:829.8px;--s:15px;--o:0.98px;color:#5F646C">Amy Jacobs<span class="sdot"></span>Not Contacted</div>
</div></div>

<!-- CARD 2 -->
<div class="card" style="left:559px;width:427px"></div>
<div class="t m" style="--x:579.3px;--y:344px;--s:18.62px;--o:-0.93px;color:#1A1A1A;letter-spacing:0.90px">Unresponded (171)</div>
<svg style="left:765px;top:341.5px" width="20" height="20" viewBox="0 0 20 20"><circle cx="10" cy="10" r="9" fill="none" stroke="#2A2E34" stroke-width="1.4"/><circle cx="10" cy="6" r="1.2" fill="#2A2E34"/><path d="M10,8.8V14.5" stroke="#2A2E34" stroke-width="1.8"/></svg>
<svg style="left:951px;top:354px" width="18" height="17" viewBox="0 0 18 17"><path d="M6,14.5V0.9L2,5.3M11.7,0.9V14.5L15.7,10" fill="none" stroke="#3F434B" stroke-width="1.7" stroke-linecap="round" stroke-linejoin="round"/></svg>
<svg style="left:578.5px;top:365.8px" width="15" height="14" viewBox="0 0 15 14"><path d="M12.3,5.2A5.6,5.6 0 1 0 12.6,8.6" fill="none" stroke="#9DA1A8" stroke-width="1.3" stroke-linecap="round"/><path d="M12.8,1.5V5.6H8.8" fill="none" stroke="#9DA1A8" stroke-width="1.3" stroke-linecap="round" stroke-linejoin="round"/></svg>
<div class="t" style="--x:599.5px;--y:368.2px;--s:14.6px;--o:-0.16px;color:#9DA1A8;letter-spacing:0.35px">2 min ago</div>
<div class="a" style="left:559px;top:400px;width:427px;height:1px;background:#E6E8EB"></div>
<div class="a" style="left:980px;top:401px;width:6px;height:443px;background:#EEEFF1"></div>
<div class="a" style="left:980.5px;top:402px;width:5px;height:107px;background:#D3D5D9;border-radius:3px"></div>
<div class="t m" style="--x:579.3px;--y:424.4px;--s:15.74px;--o:-1.36px;color:#1F2125;letter-spacing:0.81px">Ruthann Kai Fay</div>
<div class="t" style="--x:579.3px;--y:453.4px;--s:17.8px;--o:-1.78px;color:#5F646C">1 new duplicate lead received</div>
<div class="a" style="left:559px;top:490.0px;width:421px;height:1px;background:#E8EAED"></div>
<div class="t m" style="--x:579.3px;--y:513.9px;--s:15.74px;--o:-1.36px;color:#1F2125;letter-spacing:0.96px">Dach-Goodwin</div>
<div class="t" style="--x:579.3px;--y:542.9px;--s:17.8px;--o:-1.78px;color:#5F646C">99 new duplicate leads received</div>
<div class="a badge" style="left:932px;top:540.5px">99</div>
<div class="a" style="left:559px;top:579.5px;width:421px;height:1px;background:#E8EAED"></div>
<div class="t m" style="--x:579.3px;--y:603.4px;--s:15.74px;--o:-1.36px;color:#1F2125;letter-spacing:0.78px">Marylee Vannesa Bradtke</div>
<div class="t" style="--x:579.3px;--y:632.4px;--s:17.8px;--o:-1.78px;color:#5F646C">99 new duplicate leads received</div>
<div class="a badge" style="left:932px;top:630.0px">99</div>
<div class="a" style="left:559px;top:669.0px;width:421px;height:1px;background:#E8EAED"></div>
<div class="t m" style="--x:579.3px;--y:692.9px;--s:15.74px;--o:-1.36px;color:#1F2125;letter-spacing:0.90px">Ian Adam Torp</div>
<div class="t" style="--x:579.3px;--y:721.9px;--s:17.8px;--o:-1.78px;color:#5F646C">1 new duplicate lead received</div>
<div class="a" style="left:559px;top:758.5px;width:421px;height:1px;background:#E8EAED"></div>
<div class="t m" style="--x:579.3px;--y:782.4px;--s:15.74px;--o:-1.36px;color:#1F2125;letter-spacing:0.82px">Rodrigo Sheila Walter</div>
<div class="t" style="--x:579.3px;--y:811.4px;--s:17.8px;--o:-1.78px;color:#5F646C">1 new duplicate lead received</div>

</div>
<!-- PIPELINE -->
<div class="a" style="left:107px;top:870px;width:1781px;height:160px;background:#fff;border-radius:5px;box-shadow:0 0 2px rgba(0,0,0,.05)"></div>
<div class="t m" style="--x:127px;--y:898px;--s:20.35px;--o:-0.17px;color:#1A1A1A;letter-spacing:1.09px">Pipeline Overview</div>
<div class="a" style="left:1033px;top:887px;width:367px;height:41px;border:1px solid #C9CCD1;border-radius:3px;background:#fff"></div>
<div class="a" style="left:1350px;top:888px;width:1px;height:39px;background:#D5D8DC"></div>
<svg style="left:1049px;top:896px" width="22" height="22" viewBox="0 0 22 22"><circle cx="9" cy="9" r="7.3" fill="none" stroke="#8E939A" stroke-width="1.8"/><path d="M14.3,14.3L19.8,19.8" stroke="#8E939A" stroke-width="1.9" stroke-linecap="round"/></svg>
<div class="t" style="--x:1083px;--y:900.5px;--s:16.8px;--o:-1.57px;color:#9DA1A8">Search</div>
<svg style="left:1365px;top:896px" width="20" height="20" viewBox="0 0 20 20"><circle cx="10" cy="10" r="9" fill="none" stroke="#1A1A1A" stroke-width="1.5"/><circle cx="10" cy="5.8" r="1.3" fill="#1A1A1A"/><path d="M10,8.5V14.8" stroke="#1A1A1A" stroke-width="2.1"/></svg>
<div class="a" style="left:1429px;top:887px;width:400px;height:40px;border:1px solid #8E939A;border-radius:3px;background:#fff"></div>
<div class="t" style="--x:1477px;--y:900.5px;--s:17.3px;--o:-0.64px;color:#B9BCC2">Start date</div>
<div class="a" style="left:1592px;top:903px;width:5px;height:1.5px;background:#444"></div>
<div class="t" style="--x:1639.8px;--y:900.5px;--s:17px;--o:-0.60px;color:#B9BCC2">End date</div>
<svg style="left:1793px;top:897px" width="18" height="18" viewBox="0 0 18 18"><rect x="1.5" y="3" width="14.5" height="13" rx="1" fill="none" stroke="#222" stroke-width="1.5"/><path d="M1.5,7H16M5,1V4.5M12.5,1V4.5" stroke="#222" stroke-width="1.5"/></svg>
<div class="a" style="left:1814px;top:870px;width:72px;height:68px;border-radius:16px;background:#F3F4F6;filter:blur(2.5px)"></div>
<svg style="left:1824px;top:878px" width="52" height="52" viewBox="0 0 52 52">
<path d="M8,0.7H43.5A7.5,7.5 0 0 1 51,8.2V33L32.2,51H8A7.5,7.5 0 0 1 0.5,43.5V8.2A7.5,7.5 0 0 1 8,0.7Z" fill="#F7D31F"/>
<path d="M51,33L32.2,51V42C32.2,36 36,33 42,33Z" fill="#E0B414"/>
<path d="M14.5,39.5L16.5,31L33,14.5L39.5,21L23,37.5Z" fill="#fff"/>
<path d="M35,12.5L37.5,10A3.2,3.2 0 0 1 42,10.2L43.8,12A3.2,3.2 0 0 1 44,16.5L41.5,19Z" fill="#fff"/>
</svg>
<div class="a" style="left:107px;top:946px;width:1781px;height:1px;background:#E6E8EB"></div>
<!-- pipeline stages -->
<svg style="left:0;top:940px" width="1918" height="70">
<g fill="#E3E4E7">
<path d="M438,42H452L466,70H452Z"/>
<path d="M795,42H809L823,70H809Z"/>
<path d="M1151,42H1165L1179,70H1165Z"/>
<path d="M1507,42H1521L1535,70H1521Z"/>
</g></svg>
<div class="t m" style="--x:179.5px;--y:979px;--s:17.95px;--o:-1.78px;color:#434A55;letter-spacing:0.88px">New Leads</div>
<svg style="left:283px;top:976px" width="20" height="20" viewBox="0 0 20 20"><circle cx="10" cy="10" r="8.8" fill="none" stroke="#8E939A" stroke-width="1.3"/><circle cx="10" cy="6" r="1.1" fill="#8E939A"/><path d="M10,8.6V14.3" stroke="#8E939A" stroke-width="1.6"/></svg>
<div class="t m" style="--x:512px;--y:979px;--s:17.95px;--o:-1.78px;color:#434A55;letter-spacing:1.09px">Attempted Contact</div>
<svg style="left:684.5px;top:976px" width="20" height="20" viewBox="0 0 20 20"><circle cx="10" cy="10" r="8.8" fill="none" stroke="#8E939A" stroke-width="1.3"/><circle cx="10" cy="6" r="1.1" fill="#8E939A"/><path d="M10,8.6V14.3" stroke="#8E939A" stroke-width="1.6"/></svg>
<div class="t m" style="--x:868.4px;--y:978px;--s:17.76px;--o:-1.78px;color:#3F7CE8;letter-spacing:1.00px">Engaged</div>
<svg style="left:952.5px;top:975px" width="20" height="20" viewBox="0 0 20 20"><circle cx="10" cy="10" r="8.8" fill="none" stroke="#8E939A" stroke-width="1.3"/><circle cx="10" cy="6" r="1.1" fill="#8E939A"/><path d="M10,8.6V14.3" stroke="#8E939A" stroke-width="1.6"/></svg>
<div class="t m" style="--x:1224px;--y:979px;--s:17.76px;--o:-1.78px;color:#434A55;letter-spacing:1.01px">Visited Unsold Leads</div>
<svg style="left:1417px;top:976px" width="20" height="20" viewBox="0 0 20 20"><circle cx="10" cy="10" r="8.8" fill="none" stroke="#8E939A" stroke-width="1.3"/><circle cx="10" cy="6" r="1.1" fill="#8E939A"/><path d="M10,8.6V14.3" stroke="#8E939A" stroke-width="1.6"/></svg>
<div class="t m" style="--x:1581px;--y:979px;--s:16.80px;--o:-1.57px;color:#434A55;letter-spacing:1.07px">Sold</div>
<svg style="left:1625.5px;top:976px" width="20" height="20" viewBox="0 0 20 20"><circle cx="10" cy="10" r="8.8" fill="none" stroke="#8E939A" stroke-width="1.3"/><circle cx="10" cy="6" r="1.1" fill="#8E939A"/><path d="M10,8.6V14.3" stroke="#8E939A" stroke-width="1.6"/></svg>
<!-- page scrollbar strip -->
<div class="a" style="left:1910px;top:216px;width:4px;height:788px;background:#E2E4E8"></div>

<!-- recording pill -->
<div class="a" style="left:25px;top:940px;width:221px;height:58px;border-radius:29px;background:#fff;box-shadow:0 1px 6px rgba(0,0,0,.18)"></div>
<svg style="left:48px;top:963px" width="16" height="12" viewBox="0 0 16 12"><path d="M2,2L6,6L2,10M8,2L12,6L8,10" fill="none" stroke="#8E939A" stroke-width="1.6" stroke-linecap="round" stroke-linejoin="round"/></svg>
<div class="a" style="left:85px;top:955px;width:1px;height:28px;background:#DADDE1"></div>
<div class="a" style="left:98px;top:950px;width:138px;height:38px;border-radius:19px;background:#F5F6F7"></div>
<svg style="left:107px;top:958px" width="22" height="22" viewBox="0 0 22 22"><circle cx="11" cy="11" r="10" fill="#2A2D33"/><rect x="7.5" y="7.5" width="7" height="7" rx="1" fill="#fff"/></svg>
<div class="t" style="--x:138px;--y:962px;--s:18px;--o:-0.78px;color:#2A2E34">00:33</div>
<div class="a" style="left:207px;top:960px;width:3px;height:17px;background:#7A8089;border-radius:1px"></div>
<div class="a" style="left:215px;top:960px;width:3px;height:17px;background:#7A8089;border-radius:1px"></div>

<!-- cursor -->
<svg style="left:1425px;top:277px" width="16" height="24" viewBox="0 0 16 24"><path d="M1,1V19L5.5,15L8.5,22L11.5,20.7L8.6,14H14Z" fill="#111" stroke="#fff" stroke-width="1.2" stroke-linejoin="round"/></svg>

<!-- yellow frame -->
<div class="a" style="left:0;top:0;width:1918px;height:4px;background:#F7DF00"></div>
<div class="a" style="left:0;top:1004px;width:1918px;height:4px;background:#F7DF00"></div>
<div class="a" style="left:0;top:0;width:4px;height:1008px;background:#F7DF00"></div>
<div class="a" style="left:1914px;top:0;width:4px;height:1008px;background:#F7DF00"></div>
</body></html>
